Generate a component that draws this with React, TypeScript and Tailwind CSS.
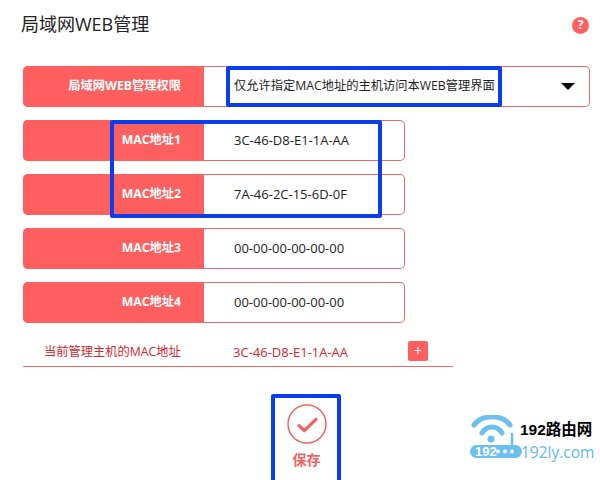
import React from 'react';

const FONT = 'font-["Open_Sans","Noto_Sans_CJK_SC",sans-serif]';

const macRows = [
  { label: 'MAC地址1', value: '3C-46-D8-E1-1A-AA' },
  { label: 'MAC地址2', value: '7A-46-2C-15-6D-0F' },
  { label: 'MAC地址3', value: '00-00-00-00-00-00' },
  { label: 'MAC地址4', value: '00-00-00-00-00-00' },
];

const Label: React.FC<{ text: string }> = ({ text }) => (
  <div className="w-[181px] shrink-0 h-[41px] -my-px bg-[#ff5f5f] rounded-l-[5px] flex items-center justify-end pr-[23px] text-white text-[12.25px] font-bold">
    {text}
  </div>
);

const Logo: React.FC = () => (
  <div className="absolute left-[470px] top-[415px] w-[126px] h-[46px]">
    <svg className="absolute left-0 top-0" width="126" height="46" viewBox="0 0 126 46" fill="none">
      <path d="M4 10 C12 -1 32 -1 40 10" stroke="#6cc0f0" strokeWidth="5" strokeLinecap="round" />
      <path d="M12 18 C17 10 27 10 32 18" stroke="#6cc0f0" strokeWidth="5" strokeLinecap="round" />
      <circle cx="21" cy="24" r="3.5" fill="#6cc0f0" />
      <path d="M42 32 L42 18" stroke="#6cc0f0" strokeWidth="2.5" />
      <rect x="0" y="30" width="52" height="13" rx="6.5" fill="#6cc0f0" />
      <circle cx="28" cy="36.5" r="2" fill="#fff" />
      <circle cx="35" cy="36.5" r="2" fill="#fff" />
      <circle cx="42" cy="36.5" r="2" fill="#fff" />
    </svg>
    <span className="absolute left-[5px] top-[29px] text-white text-[13px] leading-[15px] font-bold font-['Liberation_Sans',sans-serif]">192</span>
    <span className="absolute left-[50px] top-[7px] text-black text-[15.5px] leading-[16px] font-bold whitespace-nowrap font-['Liberation_Sans','Noto_Sans_CJK_SC',sans-serif]">192路由网</span>
    <span className="absolute left-[51px] top-[29px] text-[#5cb8ee] text-[15.5px] leading-[16px] whitespace-nowrap">192ly.com</span>
  </div>
);

const App: React.FC = () => {
  return (
    <div className={`relative w-[600px] h-[480px] overflow-hidden bg-white text-[#222] ${FONT}`}>
      <div className="flex flex-col pl-[23px] pt-[12px]">
        <div className="flex items-center justify-between h-[26px] pr-[11px] mb-[28px]">
          <h1 className="-ml-[2px] mb-[2px] text-[18px] font-normal leading-[26px] text-[#222]">局域网WEB管理</h1>
          <div className="w-[17px] h-[17px] rounded-full bg-[#ff5f5f] text-white text-[12px] font-bold flex items-center justify-center">?</div>
        </div>

        <div className="w-[567px] h-[41px] flex items-center border border-l-0 border-[#e9686a] rounded-[5px] mb-[13px]">
          <Label text="局域网WEB管理权限" />
          <span className="pl-[30px] text-[12.25px] whitespace-nowrap">仅允许指定MAC地址的主机访问本WEB管理界面</span>
          <div className="ml-auto mr-[14px] -mt-[1px] w-0 h-0 border-x-[7.5px] border-x-transparent border-t-[7.5px] border-t-black" />
        </div>

        <div className="flex flex-col gap-[13px]">
          {macRows.map((row) => (
            <div key={row.label} className="w-[382px] h-[41px] flex items-center border border-l-0 border-[#e9686a] rounded-[5px]">
              <Label text={row.label} />
              <span className="pl-[30px] text-[13px]">{row.value}</span>
            </div>
          ))}
        </div>

        <div className="w-[430px] h-[44px] flex items-end pb-[5px] border-b border-[#e9686a] text-[#d9252a] text-[12.25px]">
          <span className="w-[210px] pl-[21px] -mb-px leading-[20px] whitespace-nowrap">当前管理主机的MAC地址</span>
          <span className="w-[175px] -mb-px text-[13px] leading-[20px]">3C-46-D8-E1-1A-AA</span>
          <div className="w-[20px] h-[20px] rounded-[2px] bg-[#ff5f5f] text-white text-[14px] leading-none flex items-center justify-center">+</div>
        </div>

        <div className="w-[567px] flex flex-col items-center pt-[37px]">
          <svg width="40" height="40" viewBox="0 0 40 40" fill="none">
            <circle cx="20" cy="20" r="19" stroke="#f2625f" strokeWidth="1.5" />
            <path d="M12 21.7 L17.3 26.7 L29 15.3" stroke="#f2625f" strokeWidth="3.2" strokeLinecap="round" strokeLinejoin="round" />
          </svg>
          <span className="mt-[4px] text-[#f2625f] text-[14px] font-bold leading-[24px]">保存</span>
        </div>
      </div>

      <div className="absolute left-[226px] top-[66px] w-[276px] h-[41px] border-[4px] border-[#0a3cf0] rounded-[2px]" />
      <div className="absolute left-[110px] top-[120px] w-[272px] h-[98px] border-[4px] border-[#0a3cf0] rounded-[2px]" />
      <div className="absolute left-[271px] top-[394px] w-[70px] h-[90px] border-[4px] border-[#0a3cf0] rounded-[2px]" />

      <Logo />
    </div>
  );
};

export default App;
